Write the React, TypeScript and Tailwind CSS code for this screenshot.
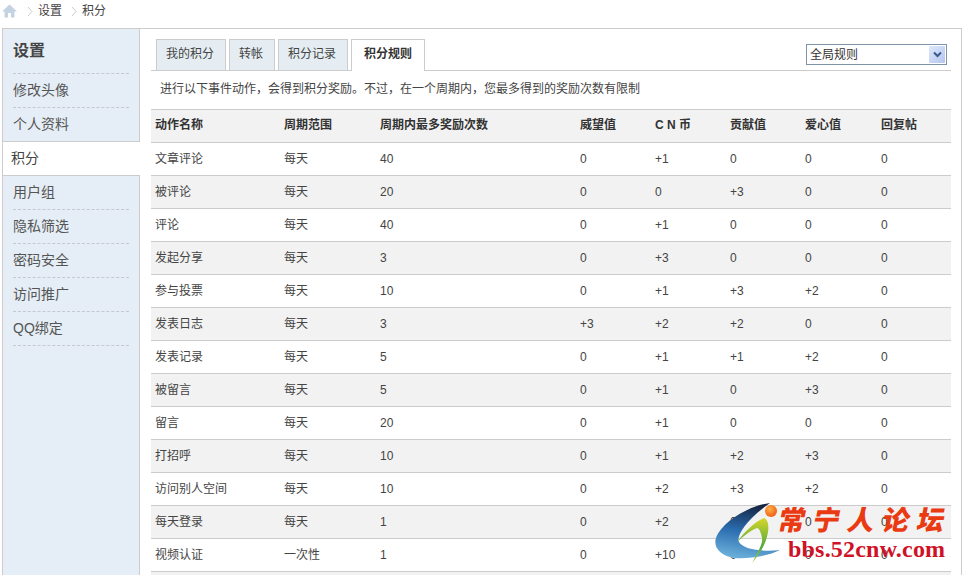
const cjk = "font-['Liberation_Sans','Noto_Sans_CJK_SC',sans-serif]";

const menu = [
  { label: "修改头像" },
  { label: "个人资料" },
  { label: "积分", active: true },
  { label: "用户组" },
  { label: "隐私筛选" },
  { label: "密码安全" },
  { label: "访问推广" },
  { label: "QQ绑定" },
];

const tabs = [
  { label: "我的积分", width: "w-[70px]" },
  { label: "转帐", width: "w-[46px]" },
  { label: "积分记录", width: "w-[70px]" },
];

const headers = ["动作名称", "周期范围", "周期内最多奖励次数", "威望值", "C N 币", "贡献值", "爱心值", "回复帖"];

const rows = [
  ["文章评论", "每天", "40", "0", "+1", "0", "0", "0"],
  ["被评论", "每天", "20", "0", "0", "+3", "0", "0"],
  ["评论", "每天", "40", "0", "+1", "0", "0", "0"],
  ["发起分享", "每天", "3", "0", "+3", "0", "0", "0"],
  ["参与投票", "每天", "10", "0", "+1", "+3", "+2", "0"],
  ["发表日志", "每天", "3", "+3", "+2", "+2", "0", "0"],
  ["发表记录", "每天", "5", "0", "+1", "+1", "+2", "0"],
  ["被留言", "每天", "5", "0", "+1", "0", "+3", "0"],
  ["留言", "每天", "20", "0", "+1", "0", "0", "0"],
  ["打招呼", "每天", "10", "0", "+1", "+2", "+3", "0"],
  ["访问别人空间", "每天", "10", "0", "+2", "+3", "+2", "0"],
  ["每天登录", "每天", "1", "0", "+2", "0", "0", "0"],
  ["视频认证", "一次性", "1", "0", "+10", "0", "0", "0"],
];

function Breadcrumb() {
  return (
    <div className="flex h-[28px] items-start pl-[2px] pt-[4px] text-[12px] leading-[15px] text-[#444]">
      <svg width="15" height="14" viewBox="0 0 15 14">
        <path d="M7.5 0.5 L15 7.5 H12.5 V13.5 H9 V9 H6 V13.5 H2.5 V7.5 H0 Z" fill="#c3d3e2" />
      </svg>
      <svg width="6" height="11" viewBox="0 0 6 11" className="ml-[10px] mt-[2px]">
        <path d="M1 1 L5 5.5 L1 10" fill="none" stroke="#ccc" />
      </svg>
      <span className="ml-[5px]">设置</span>
      <svg width="6" height="11" viewBox="0 0 6 11" className="ml-[9px] mt-[2px]">
        <path d="M1 1 L5 5.5 L1 10" fill="none" stroke="#ccc" />
      </svg>
      <span className="ml-[5px]">积分</span>
    </div>
  );
}

function Sidebar() {
  return (
    <aside className="w-[137px] shrink-0 border-r border-[#ccc] bg-[#e5eef6]">
      <h2 className="mx-[10px] h-[45px] border-b border-dashed border-[#c4c9ce] pt-[11px] text-[16px] font-bold leading-[22px] text-[#444]">设置</h2>
      {menu.map((item) =>
        item.active ? (
          <div key={item.label} className="-mr-px -mt-px h-[35px] border-y border-[#ccc] bg-white pl-[8px] text-[14px] leading-[33px] text-[#444]">
            {item.label}
          </div>
        ) : (
          <div key={item.label} className="mx-[10px] h-[34px] border-b border-dashed border-[#c4c9ce] text-[14px] leading-[33px] text-[#555]">
            {item.label}
          </div>
        ),
      )}
    </aside>
  );
}

function Tabs() {
  return (
    <div className="flex h-[42px] items-end justify-between border-b border-[#ccc] pl-[5px] pr-[4px]">
      <div className="flex gap-[3px]">
        {tabs.map((tab) => (
          <div key={tab.label} className={`${tab.width} -mb-px h-[32px] border border-[#ccc] bg-[#e5edf2] pr-[2px] text-center text-[12px] leading-[28px] text-[#444]`}>
            {tab.label}
          </div>
        ))}
        <div className="-mb-px h-[32px] w-[74px] border border-b-0 border-[#ccc] bg-white text-center text-[12px] font-bold leading-[28px] text-[#333]">积分规则</div>
      </div>
      <div className="mb-[5px] flex h-[21px] w-[141px] items-center justify-between border border-[#7f93a8] bg-white pl-[3px] pr-px text-[12px] text-[#333]">
        <span>全局规则</span>
        <div className="flex h-[17px] w-[16px] items-center justify-center rounded-[1px] bg-gradient-to-br from-[#dfe8fb] to-[#b4c6ee]">
          <svg width="9" height="7" viewBox="0 0 9 7">
            <path d="M1 1.5 L4.5 5 L8 1.5" fill="none" stroke="#3c5a8c" strokeWidth="2" />
          </svg>
        </div>
      </div>
    </div>
  );
}

function RulesTable() {
  return (
    <table className="w-[800px] table-fixed border-collapse text-[12px] text-[#444]">
      <colgroup>
        <col className="w-[129px]" />
        <col className="w-[96px]" />
        <col className="w-[200px]" />
        <col className="w-[75px]" />
        <col className="w-[75px]" />
        <col className="w-[75px]" />
        <col className="w-[76px]" />
        <col className="w-[74px]" />
      </colgroup>
      <thead>
        <tr className="h-[33px] border-y border-[#ccc] bg-[#f2f2f2]">
          {headers.map((h) => (
            <th key={h} className="pb-[2px] pl-[4px] text-left font-bold text-[#333]">{h}</th>
          ))}
        </tr>
      </thead>
      <tbody>
        {rows.map((row, i) => (
          <tr key={row[0]} className={`h-[33px] border-b border-[#ccc] ${i % 2 === 1 ? "bg-[#f2f2f2]" : "bg-white"}`}>
            {row.map((cell, j) => (
              <td key={j} className="pl-[4px]">{cell}</td>
            ))}
          </tr>
        ))}
        <tr className="h-[33px] bg-[#f2f2f2]">
          <td colSpan={8} />
        </tr>
      </tbody>
    </table>
  );
}

// 论坛水印，压在表格右下角
function Watermark() {
  return (
    <div className="pointer-events-none absolute left-[714px] top-[500px] h-[65px] w-[235px]">
      <svg width="85" height="64" viewBox="0 0 85 64" className="absolute left-0 top-0">
        <defs>
          <linearGradient id="crescent" x1="50%" y1="0%" x2="30%" y2="100%">
            <stop stopColor="#15233f" offset="0%" />
            <stop stopColor="#2a6cae" offset="50%" />
            <stop stopColor="#6db2dc" offset="100%" />
          </linearGradient>
          <linearGradient id="swoosh" x1="50%" y1="0%" x2="50%" y2="100%">
            <stop stopColor="#d8d62a" offset="0%" />
            <stop stopColor="#4fa83d" offset="65%" />
            <stop stopColor="#a8cf6a" offset="100%" />
          </linearGradient>
          <radialGradient id="ball" cx="40%" cy="35%" r="70%">
            <stop stopColor="#ffb04a" offset="0%" />
            <stop stopColor="#ef5a12" offset="100%" />
          </radialGradient>
        </defs>
        <path d="M56 3 C34 6 8 22 2 38 C-1 47 6 56 20 58 C36 59 54 56 66 50 C50 52 30 50 25 42 C22 36 32 20 56 3 Z" fill="url(#crescent)" />
        <path d="M23 42 C32 30 42 21 50 18 C54 19 55 26 54 32 C52 44 46 54 38 63 C44 52 49 44 48 38 C47 32 45 28 43 28 C37 30 30 36 23 42 Z" fill="url(#swoosh)" />
        <circle cx="57" cy="11" r="6" fill="url(#ball)" />
      </svg>
      <div className="absolute left-[65px] top-0 flex h-[36px] w-[166px] -skew-x-12 items-center justify-between font-['Noto_Sans_CJK_SC',sans-serif] text-[27px] font-black leading-none text-[#ea3a12]">
        <span>常</span>
        <span>宁</span>
        <span>人</span>
        <span>论</span>
        <span>坛</span>
      </div>
      <div className="absolute left-[74px] top-[36px] font-['Liberation_Serif',serif] text-[24px] font-bold leading-[26px] tracking-[0.2px] text-[#cf1226]">
        bbs.52cnw.com
      </div>
    </div>
  );
}

export default function App() {
  return (
    <div className={`relative h-[575px] w-[965px] overflow-hidden bg-white ${cjk}`}>
      <Breadcrumb />
      <div className="ml-[2px] flex h-[560px] w-[960px] border border-[#ccc]">
        <Sidebar />
        <main className="ml-[11px] w-[800px]">
          <Tabs />
          <p className="h-[38px] pl-[9px] text-[12px] leading-[37px] text-[#444]">
            进行以下事件动作，会得到积分奖励。不过，在一个周期内，您最多得到的奖励次数有限制
          </p>
          <RulesTable />
        </main>
      </div>
      <Watermark />
    </div>
  );
}
